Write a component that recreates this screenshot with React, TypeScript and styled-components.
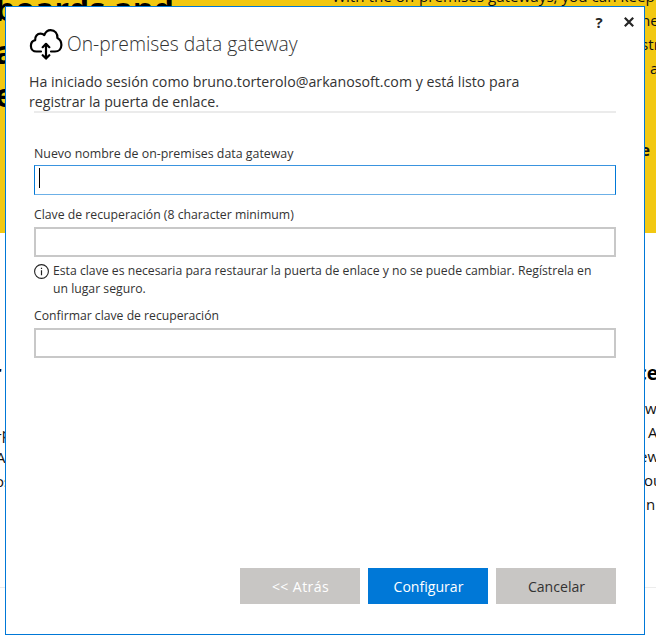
import React from "react";
import styled, { createGlobalStyle, css } from "styled-components";

const GlobalStyle = createGlobalStyle`
  * { box-sizing: border-box; }
  body { margin: 0; overflow: hidden; font-family: "Open Sans", "Noto Sans", sans-serif; }
`;

const Screen = styled.div`
  position: relative;
  width: 656px;
  height: 644px;
  overflow: hidden;
  background: #fff;
  color: #111;
`;

/* Web page behind the dialog */
const Hero = styled.section`
  display: grid;
  grid-template-columns: 332px 1fr;
  height: 233px;
  overflow: hidden;
  background: #f2c811;
`;

const HeroTitle = styled.h1`
  display: flex;
  flex-direction: column;
  margin: -13px 0 0 -5px;
  font-size: 32px;
  font-weight: 700;
  line-height: 43px;
  color: #000;
  white-space: nowrap;
`;

const HeroCopy = styled.div`
  display: flex;
  flex-direction: column;
  margin-top: -16px;
  font-size: 15.2px;
  line-height: 24px;
  white-space: nowrap;
`;

const Line = styled.span<{ $indent?: number; $bold?: boolean; $gap?: number }>`
  display: block;
  padding-left: ${(p) => p.$indent ?? 0}px;
  margin-top: ${(p) => p.$gap ?? 0}px;
  font-weight: ${(p) => (p.$bold ? 700 : "inherit")};
`;

const Features = styled.section`
  display: flex;
  justify-content: space-between;
  height: 355px;
  padding-top: 125px;
  border-bottom: 1px solid #ececec;
`;

const Feature = styled.div<{ $side: "left" | "right" }>`
  display: flex;
  flex-direction: column;
  width: 20px;
  font-size: 15px;
  line-height: 24px;
  white-space: nowrap;
  ${(p) =>
    p.$side === "left" &&
    css`
      margin-left: -8px;
    `}
`;

const FeatureTitle = styled.h2<{ $indent?: number }>`
  margin: 0 0 8px;
  padding-left: ${(p) => p.$indent ?? 0}px;
  font-size: 19px;
  font-weight: 700;
  line-height: 30px;
  color: #000;
`;

/* Dialog */
const Dialog = styled.main`
  position: absolute;
  left: 5px;
  top: 6px;
  display: flex;
  flex-direction: column;
  width: 640px;
  height: 629px;
  border: 1px solid #0078d7;
  background: #fff;
  color: #333;
`;

const WindowBar = styled.div`
  display: flex;
  justify-content: flex-end;
  align-items: center;
  gap: 16px;
  height: 20px;
  padding: 10px 8px 0 0;
`;

const WindowButton = styled.button`
  display: flex;
  align-items: center;
  justify-content: center;
  width: 14px;
  height: 14px;
  padding: 0;
  border: 0;
  background: none;
  color: #262626;
  font: 700 15px/14px "Open Sans", sans-serif;
`;

const Header = styled.header`
  display: flex;
  align-items: center;
  height: 34px;
  padding-left: 23px;
`;

const Title = styled.h1`
  margin: 0 0 0 4px;
  font-size: 19.3px;
  font-weight: 300;
  line-height: 26px;
  white-space: nowrap;
`;

const Intro = styled.p`
  margin: 11px 0 0 23px;
  font-size: 14.2px;
  line-height: 20px;
  white-space: nowrap;
`;

const Divider = styled.hr`
  width: 582px;
  height: 2px;
  margin: -1px 0 0 28px;
  border: 0;
  background: #ebebeb;
`;

const Form = styled.form`
  display: flex;
  flex-direction: column;
  width: 582px;
  margin: 32px 0 0 28px;
`;

const Label = styled.label<{ $size?: number }>`
  display: block;
  height: 18px;
  font-size: ${(p) => p.$size ?? 12.2}px;
  line-height: 18px;
  white-space: nowrap;
`;

const Input = styled.input`
  width: 582px;
  height: 30px;
  padding: 0 4px;
  outline: 0;
  border: 2px solid #c8c8c8;
  background: #fff;
`;

const ActiveField = styled.div`
  display: flex;
  width: 582px;
  height: 30px;
  padding: 2px 4px;
  border: 1px solid #0078d7;
  border-top-color: #3a94df;
  border-bottom-color: #6cb0e7;
`;

const Caret = styled.span`
  width: 1px;
  height: 20px;
  background: #000;
`;

const Field = styled.div<{ $gap?: number; $space: number }>`
  display: flex;
  flex-direction: column;
  gap: ${(p) => p.$gap ?? 3}px;
  margin-bottom: ${(p) => p.$space}px;
`;

const Hint = styled.div`
  display: flex;
  gap: 3px;
  margin-bottom: 9px;
  font-size: 12.22px;
  line-height: 18px;
  white-space: nowrap;
`;

const HintIcon = styled.svg`
  flex: none;
  margin-top: 2px;
`;

const Footer = styled.footer`
  display: flex;
  justify-content: flex-end;
  gap: 8px;
  margin: auto 28px 30px 0;
`;

const Button = styled.button<{ $kind: "disabled" | "primary" | "plain" }>`
  width: 120px;
  height: 36px;
  padding: 0 0 0 1px;
  border: 0;
  font: 400 14.1px "Open Sans", sans-serif;
  background: ${(p) => (p.$kind === "primary" ? "#0078d7" : "#c8c6c4")};
  color: ${(p) => (p.$kind === "plain" ? "#333" : "#fff")};
  letter-spacing: ${(p) => (p.$kind === "disabled" ? 0.4 : 0)}px;
`;

const CloudIcon = () => (
  <svg width="34" height="32" viewBox="0 0 34 32" fill="none" stroke="#000" strokeWidth="2.2" strokeLinecap="round" strokeLinejoin="round">
    <path d="M12 23.500H7.500C4.200 23.500 1.900 21 1.900 17.900c0-3 1.900-5.200 4.300-5.800C5.800 8.300 8.300 5.700 11.500 5.700c1.500 0 2.800.5 3.800 1.400C16.500 4 18.800 2.200 21.700 2.200c4.300 0 7 3.300 6.700 7.800 2.500 1.300 4 3.900 4 6.900 0 3.900-2.700 6.600-6.500 6.600h-3.900" />
    <path d="M17 16v14M13.700 19.200 17 15.800l3.300 3.400M13.700 27.200 17 30.600l3.300-3.400" />
  </svg>
);

export default function App() {
  return (
    <Screen>
      <GlobalStyle />
      <Hero>
        <HeroTitle>
          <Line>boards and</Line>
          <Line $indent={-2}>a</Line>
          <Line>e</Line>
        </HeroTitle>
        <HeroCopy>
          <Line>With the on-premises gateways, you can keep</Line>
          <Line $indent={309}>ne</Line>
          <Line $indent={309}>stri</Line>
          <Line $indent={310}>, a</Line>
          <Line $indent={309} $bold $gap={58}>e</Line>
        </HeroCopy>
      </Hero>
      <Features>
        <Feature $side="left">
          <FeatureTitle $indent={1}>r</FeatureTitle>
          <Line $indent={5} $gap={25}>-p</Line>
          <Line $indent={4}>A</Line>
          <Line $indent={3}>os</Line>
        </Feature>
        <Feature $side="right">
          <FeatureTitle $indent={1}>ce</FeatureTitle>
          <Line $indent={9}>w</Line>
          <Line $indent={12}>A</Line>
          <Line $indent={3}>ew</Line>
          <Line $indent={8}>ou</Line>
          <Line $indent={10}>n</Line>
        </Feature>
      </Features>

      <Dialog>
        <WindowBar>
          <WindowButton aria-label="Ayuda">?</WindowButton>
          <WindowButton aria-label="Cerrar">
            <svg width="10" height="10" viewBox="0 0 10 10" stroke="#262626" strokeWidth="2.2">
              <path d="M.8.8l8.400 8.400M9.200.8L.8 9.200" />
            </svg>
          </WindowButton>
        </WindowBar>
        <Header>
          <CloudIcon />
          <Title>On-premises data gateway</Title>
        </Header>
        <Intro>
          Ha iniciado sesión como bruno.torterolo@arkanosoft.com y está listo para
          <br />
          registrar la puerta de enlace.
        </Intro>
        <Divider />
        <Form>
          <Field $space={11} $gap={2}>
            <Label $size={12.38}>Nuevo nombre de on-premises data gateway</Label>
            <ActiveField>
              <Caret />
            </ActiveField>
          </Field>
          <Field $space={5}>
            <Label $size={12.26}>Clave de recuperación (8 character minimum)</Label>
            <Input />
          </Field>
          <Hint>
            <HintIcon width="16" height="16" viewBox="0 0 16 16">
              <circle cx="7.500" cy="7.500" r="6.900" fill="none" stroke="#222" strokeWidth="1.100" />
              <path d="M7.500 6.200v5M7.500 3.700v1.300" stroke="#222" strokeWidth="1.200" />
            </HintIcon>
            <span>
              Esta clave es necesaria para restaurar la puerta de enlace y no se puede cambiar. Regístrela en
              <br />
              un lugar seguro.
            </span>
          </Hint>
          <Field $space={0}>
            <Label>Confirmar clave de recuperación</Label>
            <Input />
          </Field>
        </Form>
        <Footer>
          <Button $kind="disabled">&lt;&lt; Atrás</Button>
          <Button $kind="primary">Configurar</Button>
          <Button $kind="plain">Cancelar</Button>
        </Footer>
      </Dialog>
    </Screen>
  );
}
